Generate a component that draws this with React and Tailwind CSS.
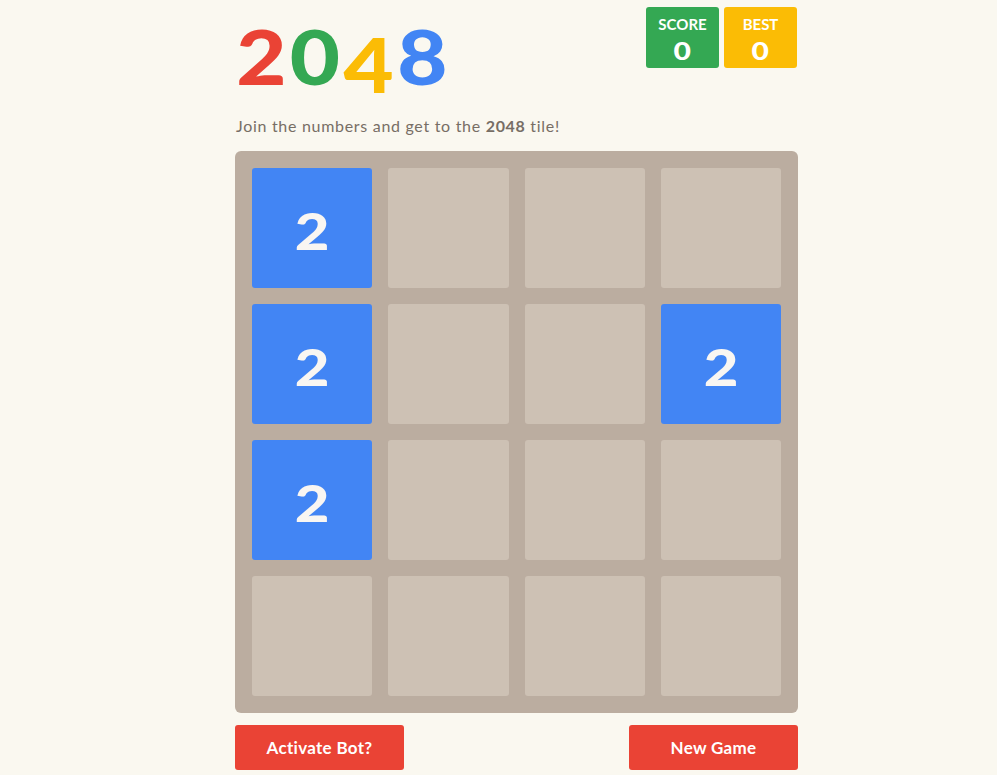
import { useState } from 'react';

const initial = [
  [2, 0, 0, 0],
  [2, 0, 0, 2],
  [2, 0, 0, 0],
  [0, 0, 0, 0],
];

function Tile({ value }) {
  if (!value) return <div className="h-[120px] rounded-[3px] bg-[#cdc1b4]" />;
  return (
    <div className="h-[120px] rounded-[3px] bg-[#4285f4] flex items-center justify-center pt-[4px] text-[#f9f6f2] text-[52px] font-black" style={{ fontFamily: 'Lato, sans-serif' }}>
      <span className="scale-x-[1.15] inline-block">{value}</span>
    </div>
  );
}

export default function App() {
  const [board] = useState(initial);
  const [score] = useState(0);
  const [best] = useState(0);

  return (
    <div className="min-h-[775px] bg-[#faf8f0] flex justify-center pl-[36px]" style={{ fontFamily: 'Lato, "Open Sans", sans-serif' }}>
      <div className="w-[563px]">
        {/* Header */}
        <div className="flex justify-between h-[114px]">
          <h1 className="text-[76px] font-black leading-none pt-[18px] pl-[1px] tracking-[3px] scale-x-[1.14] origin-left" style={{ fontFamily: 'Lato, sans-serif' }}>
            <span className="text-[#ea4335]">2</span>
            <span className="text-[#34a853]">0</span>
            <span className="text-[#fbbc05] inline-block translate-y-[8px]">4</span>
            <span className="text-[#4285f4]">8</span>
          </h1>
          <div className="flex gap-[5px] mt-[7px] mr-[1px]">
            <div className="w-[73px] h-[61px] rounded-[3px] bg-[#34a853] text-white flex flex-col items-center pt-[10px]">
              <span className="text-[15px] font-bold leading-none">SCORE</span>
              <span className="text-[25px] font-black leading-none mt-[6px] scale-x-[1.2] inline-block">{score}</span>
            </div>
            <div className="w-[73px] h-[61px] rounded-[3px] bg-[#fbbc05] text-white flex flex-col items-center pt-[10px]">
              <span className="text-[15px] font-bold leading-none">BEST</span>
              <span className="text-[25px] font-black leading-none mt-[6px] scale-x-[1.2] inline-block">{best}</span>
            </div>
          </div>
        </div>

        <p className="text-[16px] tracking-[0.7px] text-[#776e65] h-[37px] pl-[1px]">
          Join the numbers and get to the <b className="font-bold">2048</b> tile!
        </p>

        {/* Board */}
        <div className="bg-[#bbada0] rounded-[6px] p-[17px] grid grid-cols-4 gap-x-[16px] gap-y-[16px]">
          {board.flat().map((v, i) => (
            <Tile key={i} value={v} />
          ))}
        </div>

        {/* Buttons */}
        <div className="flex justify-between mt-[12px]">
          <button className="w-[169px] h-[45px] rounded-[3px] bg-[#ea4335] text-white font-bold text-[17px] tracking-[0.3px]">
            Activate Bot?
          </button>
          <button className="w-[169px] h-[45px] rounded-[3px] bg-[#ea4335] text-white font-bold text-[17px] tracking-[0.3px]">
            New Game
          </button>
        </div>
      </div>
    </div>
  );
}
